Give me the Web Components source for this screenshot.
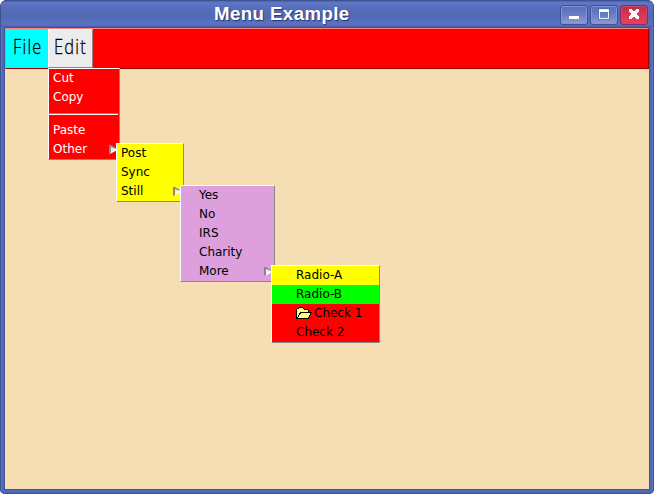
<!DOCTYPE html>
<html lang="en"><head><meta charset="utf-8"><title>Menu Example</title>
<style>html,body{margin:0;width:654px;height:494px;overflow:hidden;background:#fff}</style></head>
<body>
<app-window heading="Menu Example">
  <menu-bar slot="bar"><bar-button bg="#00ffff" wide="42" pad="7">File</bar-button><bar-button active bg="#ececec" wide="45" pad="5">Edit</bar-button></menu-bar>
  <popup-menu style="left:48px;top:68px;width:72px;height:92px;--bg:#f00;--ink:#fff;--pad:4px">
    <menu-item>Cut</menu-item><menu-item>Copy</menu-item><menu-separator></menu-separator><menu-item>Paste</menu-item><menu-item sub>Other</menu-item>
  </popup-menu>
  <popup-menu style="left:116px;top:143px;width:68px;height:59px;--bg:#ff0;--ink:#000;--pad:4px">
    <menu-item>Post</menu-item><menu-item>Sync</menu-item><menu-item sub>Still</menu-item>
  </popup-menu>
  <popup-menu style="left:180px;top:185px;width:95px;height:97px;--bg:#dda0dd;--ink:#000;--pad:18px">
    <menu-item>Yes</menu-item><menu-item>No</menu-item><menu-item>IRS</menu-item><menu-item>Charity</menu-item><menu-item sub>More</menu-item>
  </popup-menu>
  <popup-menu style="left:271px;top:265px;width:109px;height:78px;--bg:#f00;--ink:#000;--pad:24px">
    <menu-item style="background:#ff0">Radio-A</menu-item><menu-item style="background:#0f0">Radio-B</menu-item><menu-item><folder-icon slot="icon"></folder-icon>Check 1</menu-item><menu-item>Check 2</menu-item>
  </popup-menu>
</app-window>
<script>
const define=(name,html,setup)=>customElements.define(name,class extends HTMLElement{
  connectedCallback(){
    if(this.shadowRoot)return;
    this.attachShadow({mode:'open'}).innerHTML=html;
    if(setup)setup(this,this.shadowRoot);
  }
});

define('app-window',`<style>
:host{display:flex;flex-direction:column;box-sizing:border-box;position:relative;width:654px;height:494px;padding:0 5px 5px;border-radius:7px 7px 5px 5px;overflow:hidden;
background:#5068b4;box-shadow:inset 0 0 0 1px #3e5192,inset 2px 0 #5f76c4,inset -2px 0 #5f76c4}
header{flex:none;height:27px;margin:0 -4px;display:grid;grid-template-columns:1fr auto;align-items:center;position:relative;box-sizing:border-box;border-top:1px solid #3e5192;border-radius:6px 6px 0 0;
background:linear-gradient(#4e64ad 0,#6078c6 2px,#5970bf 5px,#5369b3 12px,#536bb7 17px,#5a72c3 23px,#536ab6 25px,#435594 26px)}
h1{margin:0;padding:0 0 0 213px;font:bold 18.7px/26px "Liberation Sans",Arial,sans-serif;letter-spacing:.4px;color:#fff;text-shadow:1px 1px 1px #26376e;white-space:nowrap}
nav{display:flex;gap:2px;margin-right:5px;padding-top:1px}
main{flex:1;display:flex;flex-direction:column;background:#f5deb3;border:1px solid #3e5192;border-width:1px 0 0 0;box-shadow:0 0 0 1px #43559b}
</style><header><h1></h1><nav><window-button kind="min"></window-button><window-button kind="max"></window-button><window-button kind="close"></window-button></nav></header>
<main><slot name="bar"></slot><slot></slot></main>`,(e,r)=>r.querySelector('h1').textContent=e.getAttribute('heading'));

const glyphs={
 min:'<path fill="#fff" d="M9 11h10v3H9z"/>',
 max:'<path fill="#fff" fill-rule="evenodd" d="M9 4h10v10H9zM10 7v6h8V7z"/><path fill="none" stroke="#465da8" stroke-width=".5" d="M8.700 3.700h10.600v10.600H8.700z"/>',
 close:'<path fill="#fff" d="M9 4h3v1h1v1h2V5h1V4h3v3h-1v1h-1v2h1v1h1v3h-3v-1h-1v-1h-2v1h-1v1H9v-3h1v-1h1V8h-1V7H9z"/>'};
define('window-button',`<style>
:host{display:block;width:28px;height:20px}
div{box-sizing:border-box;width:28px;height:20px;border:1px solid #3d5195;border-radius:3px;background:linear-gradient(#566fbd,#657bc4 45%,#8d9dd5);box-shadow:inset 0 0 0 1px #8395d0}
:host([kind=close]) div{background:linear-gradient(#b92e50,#d93554 50%,#ed405c);box-shadow:inset 0 0 0 1px #d44464;border-color:#6b3673}
svg{display:block;margin:-1px}
</style><div></div>`,(e,r)=>r.querySelector('div').innerHTML=`<svg width="28" height="20">${glyphs[e.getAttribute('kind')]}</svg>`);

define('menu-bar',`<style>:host{display:flex;box-sizing:border-box;height:41px;background:#f00;border:1px solid;border-color:#ff8080 #900 #900 #ff8080}</style><slot></slot>`);

define('bar-button',`<style>
:host{display:block;box-sizing:border-box;height:39px;overflow:hidden;color:#000}
:host([active]){border:1px solid;border-color:#fff #888 #888 #fff}
span{display:inline-block;font:300 20px/35px "Open Sans","Noto Sans",sans-serif;letter-spacing:1.500px;transform:scaleX(.82);transform-origin:0 50%;white-space:nowrap;-webkit-text-stroke:.3px #000}
:host([active]) span{line-height:33px}
</style><span><slot></slot></span>`,(e,r)=>{
  e.style.width=e.getAttribute('wide')+'px';e.style.background=e.getAttribute('bg');
  e.style.paddingLeft=e.getAttribute('pad')+'px';
});

define('popup-menu',`<style>
:host{position:absolute;display:flex;flex-direction:column;box-sizing:border-box;background:var(--bg);color:var(--ink);border:1px solid;border-color:#fff #888 #888 #fff;font:12px/19px "DejaVu Sans",sans-serif}
</style><slot></slot>`);

define('menu-item',`<style>
:host{display:flex;align-items:center;height:19px;padding-left:var(--pad);white-space:nowrap}
svg{display:none;margin-left:auto;margin-right:1px}
:host([sub]) svg{display:block}
</style><slot name="icon"></slot><span><slot></slot></span><svg width="9" height="9"><path fill="#ececec" d="M1 1l8 3.500L1 9z"/><path fill="#fff" d="M0 9l9-4.500-2-1L2 7z"/><path fill="#888" d="M0 0h2l6 3.500H6L2 2v6L0 9z"/></svg>`);

define('menu-separator',`<style>:host{display:flex;align-items:center;height:14px}i{flex:1;height:2px;box-sizing:border-box;margin-right:1px;border-top:1px solid #888;border-bottom:1px solid #fff}</style><i></i>`);

define('folder-icon',`<style>:host{display:block;width:16px;height:12px;margin-right:2px}svg{display:block;position:relative;top:-.5px}</style>
<svg width="16" height="12"><path fill="#000" d="M3 0h4v1h1v1h4v1h1v2h3v1h-1v2h-1v2h-1v2H0V2h1V1h2z"/><path fill="#ffff80" d="M3 1h4v1h1v1h4v2H4v1H3v2H2v2H1V2h2zM5 6h9v2h-1v2h-1v1H2v-1h1V8h1V7h1z"/></svg>`);
</script>
</body></html>
